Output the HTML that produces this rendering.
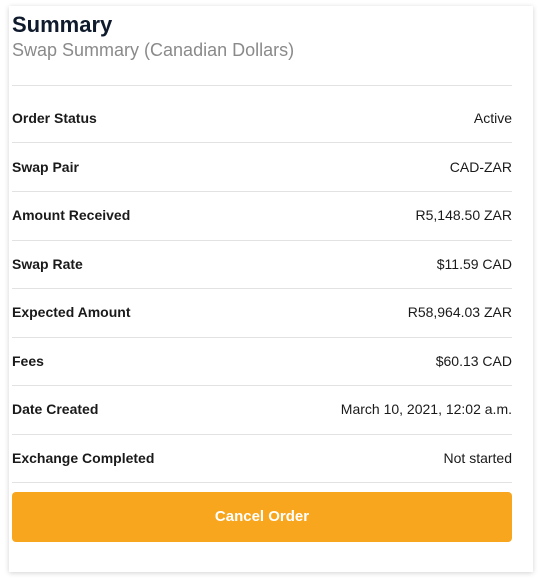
<!DOCTYPE html>
<html><head><meta charset="utf-8"><style>
*{margin:0;padding:0;box-sizing:border-box}
body{width:542px;height:581px;background:#fff;font-family:"Liberation Sans",sans-serif;position:relative;overflow:hidden}
.card{position:absolute;left:9px;top:6px;width:524px;height:566px;background:#fff;box-shadow:0 1px 5px rgba(0,0,0,.18)}
.t{position:absolute;left:12px;top:12px;font-size:22px;font-weight:bold;color:#0f1b2d}
.s{position:absolute;left:12px;top:40px;font-size:18px;color:#8a8a8a}
.hr{position:absolute;left:12px;width:500px;height:1px;background:#e2e2e2}
.row{position:absolute;left:12px;width:500px;font-size:14px;color:#1a1a1a;display:flex;justify-content:space-between}
.row b{font-weight:bold}
.btn{position:absolute;left:12px;top:492px;width:500px;height:50px;background:#f8a61e;border-radius:4px;color:#fff;font-weight:bold;font-size:15px;text-align:center;line-height:50px}
</style></head><body>
<div class="card"></div>
<div class="t">Summary</div>
<div class="s">Swap Summary (Canadian Dollars)</div>
<div class="hr" style="top:85px"></div>
<div class="row" style="top:110px"><b>Order Status</b><span>Active</span></div>
<div class="hr" style="top:142px"></div>
<div class="row" style="top:159px"><b>Swap Pair</b><span>CAD-ZAR</span></div>
<div class="hr" style="top:191px"></div>
<div class="row" style="top:207px"><b>Amount Received</b><span>R5,148.50 ZAR</span></div>
<div class="hr" style="top:240px"></div>
<div class="row" style="top:256px"><b>Swap Rate</b><span>$11.59 CAD</span></div>
<div class="hr" style="top:288px"></div>
<div class="row" style="top:304px"><b>Expected Amount</b><span>R58,964.03 ZAR</span></div>
<div class="hr" style="top:337px"></div>
<div class="row" style="top:353px"><b>Fees</b><span>$60.13 CAD</span></div>
<div class="hr" style="top:385px"></div>
<div class="row" style="top:401px"><b>Date Created</b><span>March 10, 2021, 12:02 a.m.</span></div>
<div class="hr" style="top:434px"></div>
<div class="row" style="top:450px"><b>Exchange Completed</b><span>Not started</span></div>
<div class="hr" style="top:482px"></div>
<div class="btn">Cancel Order</div>
</body></html>
